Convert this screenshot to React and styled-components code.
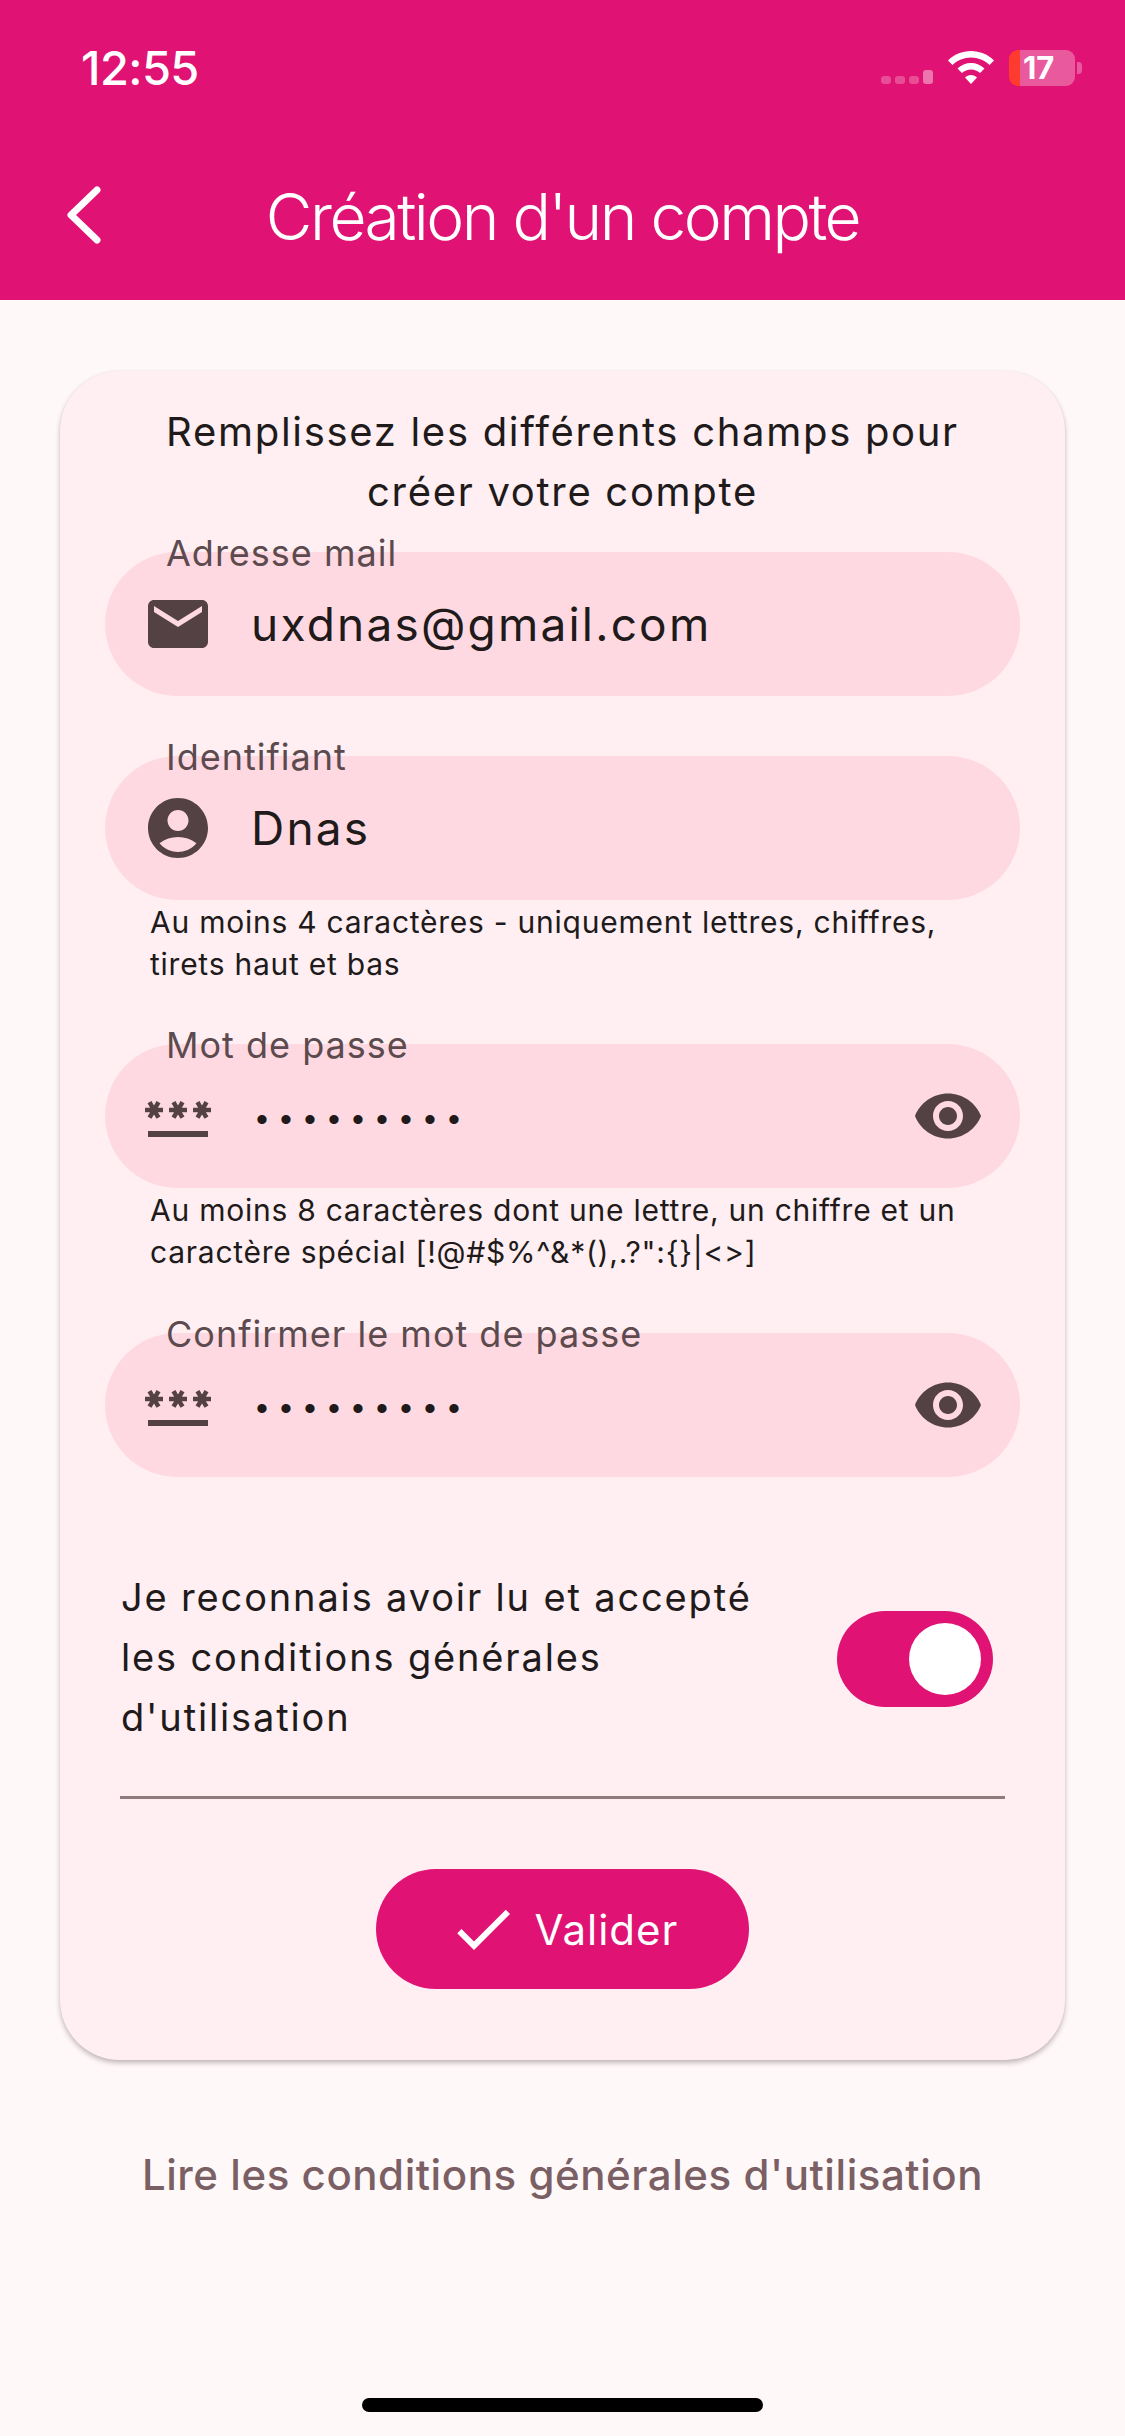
import React from 'react';
import styled, { createGlobalStyle } from 'styled-components';
import { MdMail, MdAccountCircle, MdPassword, MdVisibility, MdCheck } from 'react-icons/md';

const primary = '#e01273';
const onSurface = '#201a1b';
const iconColor = '#534144';

const GlobalStyle = createGlobalStyle`
  html, body {
    margin: 0;
    padding: 0;
    background: #fff8f8;
  }
  * {
    box-sizing: border-box;
  }
`;

const Screen = styled.div`
  width: 1125px;
  height: 2436px;
  display: flex;
  flex-direction: column;
  background: #fff8f8;
  font-family: Inter, "Liberation Sans", sans-serif;
  overflow: hidden;
`;

const Header = styled.header`
  height: 300px;
  flex-shrink: 0;
  background: ${primary};
  color: #fff;
  display: flex;
  flex-direction: column;
`;

const StatusBar = styled.div`
  height: 136px;
  padding: 47px 43px 0 81px;
  display: flex;
  justify-content: space-between;
  align-items: flex-start;
`;

const Time = styled.div`
  font-size: 47px;
  line-height: 42px;
  font-weight: 500;
  letter-spacing: -0.6px;
`;

const StatusIcons = styled.div`
  display: flex;
  align-items: flex-start;
  padding-top: 4px;
`;

const Signal = styled.div`
  display: flex;
  align-items: flex-end;
  gap: 4px;
  height: 33px;
  margin-right: 15px;
`;

const SignalBar = styled.span`
  width: 10px;
  height: ${p => (p.$tall ? 14 : 8)}px;
  border-radius: 3px;
  background: rgba(255, 255, 255, ${p => (p.$tall ? 0.42 : 0.25)});
`;

const Battery = styled.div`
  width: 66px;
  height: 36px;
  margin: -1px 0 0 15px;
  border-radius: 9px;
  background: linear-gradient(to right, #ff3b30 11px, rgba(255, 255, 255, 0.3) 11px);
  font-size: 31px;
  font-weight: 700;
  line-height: 36px;
  padding-left: 14px;
`;

const BatteryNub = styled.span`
  width: 5px;
  height: 12px;
  margin: 11px 0 0 2px;
  border-radius: 0 4px 4px 0;
  background: rgba(255, 255, 255, 0.3);
`;

const NavBar = styled.div`
  flex: 1;
  position: relative;
  display: flex;
  justify-content: center;
  align-items: flex-start;
  padding-top: 41px;
`;

const BackIcon = styled.svg`
  position: absolute;
  left: 64px;
  top: 49px;
`;

const Title = styled.h1`
  margin: 0;
  font-size: 64px;
  line-height: 80px;
  font-weight: 350;
  letter-spacing: -2.5px;
`;

const Card = styled.main`
  width: 1005px;
  margin: 71px 0 0 60px;
  padding: 31px 45px 71px;
  background: #ffeff2;
  border-radius: 60px;
  box-shadow: 0 3px 5px rgba(60, 40, 45, 0.3), 0 0 2px rgba(60, 40, 45, 0.06);
`;

const Intro = styled.p`
  margin: 0 0 30px;
  text-align: center;
  color: ${onSurface};
  font-size: 40px;
  line-height: 60px;
  letter-spacing: 1.7px;
`;

const FieldGroup = styled.div`
  margin-bottom: ${p => p.$gap}px;
`;

const Field = styled.div`
  position: relative;
  height: 144px;
  border-radius: 72px;
  background: #ffd9e1;
  display: flex;
  align-items: center;
  padding: 0 36px 0 37px;
  color: ${iconColor};
`;

const FieldLabel = styled.label`
  position: absolute;
  left: 61px;
  top: -21px;
  font-size: 36px;
  line-height: 44px;
  letter-spacing: 1px;
  color: #5c4a4e;
`;

const FieldValue = styled.span`
  flex: 1;
  margin-left: 37px;
  color: ${onSurface};
  font-size: 46px;
  line-height: 60px;
  letter-spacing: 2.2px;
`;

const Dots = styled(FieldValue)`
  font-family: "Liberation Sans", sans-serif;
  font-size: 34px;
  letter-spacing: 12.1px;
  margin-left: 42px;
  padding-top: 6px;
`;

const Helper = styled.p`
  margin: 1px 0 0;
  padding-left: 45px;
  color: ${onSurface};
  font-size: 30px;
  line-height: 42px;
  letter-spacing: 0.75px;
`;

const ConsentRow = styled.div`
  display: flex;
  justify-content: space-between;
  align-items: center;
  margin: 90px 15px 0;
  padding: 0 12px 0 1px;
  height: 180px;
`;

const ConsentText = styled.p`
  margin: 0;
  width: 670px;
  color: ${onSurface};
  font-size: 38px;
  line-height: 60px;
  letter-spacing: 1.85px;
`;

const Toggle = styled.div`
  width: 156px;
  height: 96px;
  border-radius: 48px;
  background: ${primary};
  display: flex;
  justify-content: flex-end;
  align-items: center;
  padding-right: 12px;
  margin-top: 4px;
`;

const Thumb = styled.span`
  width: 72px;
  height: 72px;
  border-radius: 50%;
  background: #fff;
`;

const Divider = styled.hr`
  margin: 49px 15px 70px;
  border: 0;
  height: 3px;
  background: #8f7a7d;
`;

const SubmitButton = styled.button`
  display: flex;
  align-items: center;
  gap: 16px;
  height: 120px;
  margin: 0 auto;
  padding: 0 71px;
  border: 0;
  border-radius: 60px;
  background: ${primary};
  color: #fff;
  font-family: inherit;
  font-size: 42px;
  letter-spacing: 1px;
`;

const TermsLink = styled.a`
  margin-top: 90px;
  text-align: center;
  color: #7a5f65;
  font-size: 42px;
  line-height: 50px;
  font-weight: 450;
  letter-spacing: 0.55px;
`;

const HomeIndicator = styled.div`
  width: 401px;
  height: 14px;
  margin: auto auto 24px;
  border-radius: 7px;
  background: #000;
`;

function InputField({ label, icon, children, trailing }) {
  return (
    <Field>
      <FieldLabel>{label}</FieldLabel>
      {icon}
      {children}
      {trailing}
    </Field>
  );
}

function App() {
  return (
    <Screen>
      <GlobalStyle />
      <Header>
        <StatusBar>
          <Time>12:55</Time>
          <StatusIcons>
            <Signal>
              <SignalBar />
              <SignalBar />
              <SignalBar />
              <SignalBar $tall />
            </Signal>
            <svg width="46" height="33" viewBox="0 0 46 33" fill="#fff">
              <path d="M23 0C14 0 6 3.5 0 9.5L4.5 14C9.5 9.3 16 6.5 23 6.5S36.500 9.300 41.500 14L46 9.500C40 3.500 32 0 23 0z" />
              <path d="M23 12C18 12 13 14 9.500 17.500L14 22C16.500 19.700 19.600 18.400 23 18.400S29.500 19.700 32 22L36.500 17.500C33 14 28 12 23 12z" />
              <path d="M23 24C20.700 24 18.600 25 17 26.400L23 33L29 26.400C27.400 25 25.300 24 23 24z" />
            </svg>
            <Battery>17</Battery>
            <BatteryNub />
          </StatusIcons>
        </StatusBar>
        <NavBar>
          <BackIcon width="40" height="60" viewBox="0 0 40 60" fill="none" stroke="#fff" strokeWidth="7" strokeLinecap="round" strokeLinejoin="round">
            <path d="M33 5L7 30L33 55" />
          </BackIcon>
          <Title>Création d'un compte</Title>
        </NavBar>
      </Header>

      <Card>
        <Intro>Remplissez les différents champs pour<br />créer votre compte</Intro>

        <FieldGroup $gap={60}>
          <InputField label="Adresse mail" icon={<MdMail size={72} />}>
            <FieldValue>uxdnas@gmail.com</FieldValue>
          </InputField>
        </FieldGroup>

        <FieldGroup $gap={59}>
          <InputField label="Identifiant" icon={<MdAccountCircle size={72} />}>
            <FieldValue>Dnas</FieldValue>
          </InputField>
          <Helper>Au moins 4 caractères - uniquement lettres, chiffres,<br />tirets haut et bas</Helper>
        </FieldGroup>

        <FieldGroup $gap={60}>
          <InputField label="Mot de passe" icon={<MdPassword size={72} />} trailing={<MdVisibility size={72} />}>
            <Dots>•••••••••</Dots>
          </InputField>
          <Helper>Au moins 8 caractères dont une lettre, un chiffre et un<br />caractère spécial [!@#$%^&amp;*(),.?":{'{}'}|&lt;&gt;]</Helper>
        </FieldGroup>

        <InputField label="Confirmer le mot de passe" icon={<MdPassword size={72} />} trailing={<MdVisibility size={72} />}>
          <Dots>•••••••••</Dots>
        </InputField>

        <ConsentRow>
          <ConsentText>Je reconnais avoir lu et accepté les conditions générales d'utilisation</ConsentText>
          <Toggle><Thumb /></Toggle>
        </ConsentRow>

        <Divider />

        <SubmitButton>
          <MdCheck size={72} />
          Valider
        </SubmitButton>
      </Card>

      <TermsLink>Lire les conditions générales d'utilisation</TermsLink>
      <HomeIndicator />
    </Screen>
  );
}

export default App;
